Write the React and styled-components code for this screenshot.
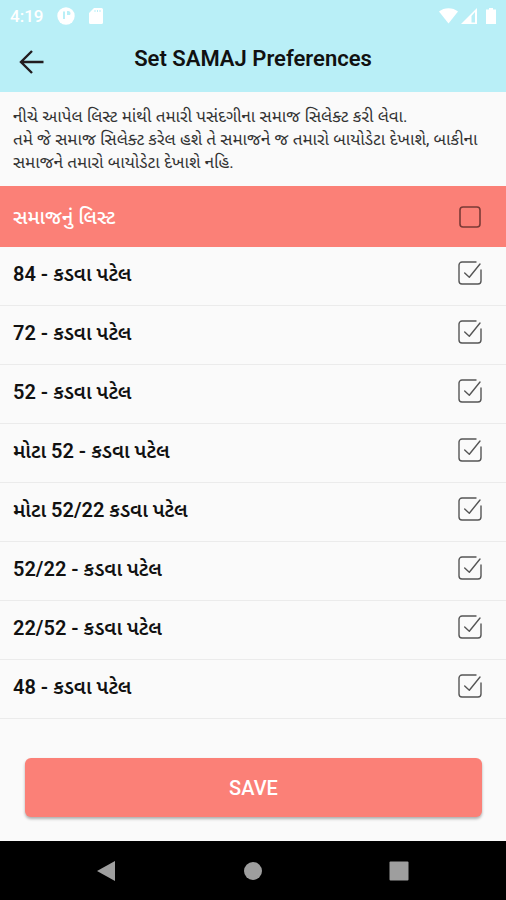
import React, { useState } from 'react'
import styled, { createGlobalStyle } from 'styled-components'

const GlobalStyle = createGlobalStyle`
    * {
        box-sizing: border-box;
    }
    body {
        margin: 0;
        background-color: #fafafa;
        color: #111111;
        font-family: Roboto, "Noto Sans Gujarati", "Noto Sans", sans-serif;
    }
`

const Page = styled.div`
    min-height: 100vh;
    display: flex;
    flex-direction: column;
`

const TopBar = styled.header`
    background-color: #b9eff7;
`

const StatusBar = styled.div`
    height: 32px;
    padding: 0 8px 0 10px;
    display: flex;
    align-items: center;
    justify-content: space-between;
    color: white;
`

const StatusGroup = styled.div`
    display: flex;
    align-items: center;
    gap: ${props => props.$gap};
`

const Clock = styled.span`
    font-size: 17px;
    font-weight: 500;
`

const AppBar = styled.div`
    height: 60px;
    padding: 0 16px;
    display: grid;
    grid-template-columns: 30px 1fr 30px;
    align-items: center;
`

const Title = styled.h1`
    margin: 0;
    padding-bottom: 6px;
    font-size: 22px;
    line-height: 28px;
    font-weight: 600;
    text-align: center;
`

const IconButton = styled.button`
    padding: 0;
    border: none;
    background: none;
    display: flex;
    color: ${props => props.$color};
    cursor: pointer;
`

const Main = styled.main`
    flex: 1;
    display: flex;
    flex-direction: column;
`

const Intro = styled.p`
    margin: 0;
    padding: 13px 13px 12px;
    font-size: 17px;
    line-height: 23px;
    color: #333333;
`

const ListHeader = styled.label`
    height: 61px;
    padding: 0 24px 0 13px;
    display: flex;
    align-items: center;
    justify-content: space-between;
    background-color: #fb8077;
    color: white;
    font-size: 20px;
    font-weight: 500;
`

const List = styled.ul`
    margin: 0;
    padding: 0;
    list-style: none;
`

const Row = styled.label`
    height: 59px;
    padding: 0 24px 6px 13px;
    display: flex;
    align-items: center;
    justify-content: space-between;
    border-bottom: 1px solid #ebebeb;
    font-size: 20px;
    font-weight: 600;
`

const RowText = styled.span`
    padding-top: 4px;
`

const TickWrap = styled.span`
    display: grid;

    & > * {
        grid-area: 1 / 1;
    }
    svg {
        pointer-events: none;
    }
`

const TickInput = styled.input`
    appearance: none;
    width: 24px;
    height: 24px;
    margin: 0;
    cursor: pointer;
`

const Footer = styled.div`
    margin-top: auto;
    padding: 24px 24px 24px 25px;
`

const SaveButton = styled.button`
    width: 100%;
    height: 59px;
    border: none;
    border-radius: 6px;
    background-color: #fb8077;
    box-shadow: 0 2px 3px rgba(0, 0, 0, 0.3);
    color: white;
    font-family: inherit;
    font-size: 20px;
    font-weight: 500;
    cursor: pointer;
`

const NavBar = styled.nav`
    height: 59px;
    padding: 0 34px;
    display: grid;
    grid-template-columns: repeat(3, 1fr);
    align-items: center;
    justify-items: center;
    background-color: black;
`

const samajList = [
    '84 - કડવા પટેલ',
    '72 - કડવા પટેલ',
    '52 - કડવા પટેલ',
    'મોટા 52 - કડવા પટેલ',
    'મોટા 52/22 કડવા પટેલ',
    '52/22 - કડવા પટેલ',
    '22/52 - કડવા પટેલ',
    '48 - કડવા પટેલ',
]

const Tick = ({ checked, onChange }) => (
    <TickWrap>
        <TickInput type="checkbox" checked={checked} onChange={onChange} />
        {checked ?
            <svg width="24" height="24" viewBox="0 0 24 24" fill="none" stroke="#555555" strokeWidth="1.4" strokeLinecap="round">
                <path d="M18 1H4a3 3 0 0 0-3 3v16a3 3 0 0 0 3 3h16a3 3 0 0 0 3-3V9" />
                <path d="M6.700 12l4.600 4.200L22 3" strokeLinejoin="round" />
            </svg>
            :
            <svg width="24" height="24" viewBox="0 0 24 24" fill="none" stroke="#7a3a36" strokeWidth="1.6">
                <rect x="2" y="2" width="20" height="20" rx="3" />
            </svg>
        }
    </TickWrap>
)

const App = () => {
    const [selected, setSelected] = useState(samajList)
    const [all, setAll] = useState(false)

    const toggle = (name) => {
        setSelected(selected.includes(name) ? selected.filter(item => item !== name) : [...selected, name])
    }

    const toggleAll = () => {
        setSelected(all ? [] : samajList)
        setAll(!all)
    }

    return (
        <>
            <GlobalStyle />
            <Page>
                <TopBar>
                    <StatusBar>
                        <StatusGroup $gap="14px">
                            <Clock>4:19</Clock>
                            <svg width="18" height="18" viewBox="0 0 18 18">
                                <circle cx="9" cy="9" r="8.700" fill="white" />
                                <path d="M6 4.500V12h2V4.500zM10 4h1.500a2.500 2.500 0 0 1 1.500 4h-3z" fill="#b9eff7" />
                            </svg>
                            <svg width="14" height="16" viewBox="0 0 14 16">
                                <path d="M5 0h7.500a1.500 1.500 0 0 1 1.500 1.500v13a1.500 1.500 0 0 1-1.500 1.500h-11A1.500 1.500 0 0 1 0 14.500V5z" fill="white" />
                                <path d="M6 2v2M8.500 2v2M11 2v2" stroke="#b9eff7" strokeWidth="1" />
                            </svg>
                        </StatusGroup>
                        <StatusGroup $gap="3px">
                            <svg width="19" height="16" viewBox="0 0 19 16">
                                <path d="M0 3.500C5-1 14-1 19 3.500L9.500 15.500z" fill="white" />
                            </svg>
                            <svg width="16" height="16" viewBox="0 0 16 16">
                                <path d="M0 16L16 0v16z" fill="white" />
                                <path d="M10.500 8v6.500H14V4z" fill="#b9eff7" />
                            </svg>
                            <svg width="18" height="16" viewBox="0 0 18 16">
                                <path d="M9 0h4v1.500h3V16H6V1.500h3z" fill="white" />
                            </svg>
                        </StatusGroup>
                    </StatusBar>
                    <AppBar>
                        <IconButton type="button" aria-label="Back" $color="#221c1f">
                            <svg width="30" height="30" viewBox="0 0 30 30" fill="none" stroke="currentColor" strokeWidth="2.4">
                                <path d="M27.500 15H5M16 4L5 15l11 11" />
                            </svg>
                        </IconButton>
                        <Title>Set SAMAJ Preferences</Title>
                    </AppBar>
                </TopBar>
                <Main>
                    <Intro>
                        નીચે આપેલ લિસ્ટ માંથી તમારી પસંદગીના સમાજ સિલેક્ટ કરી લેવા.
                        <br />
                        તમે જે સમાજ સિલેક્ટ કરેલ હશે તે સમાજને જ તમારો બાયોડેટા દેખાશે, બાકીના સમાજને તમારો બાયોડેટા દેખાશે નહિ.
                    </Intro>
                    <ListHeader>
                        <RowText>સમાજનું લિસ્ટ</RowText>
                        <Tick checked={all} onChange={toggleAll} />
                    </ListHeader>
                    <List>
                        {samajList.map(name => (
                            <li key={name}>
                                <Row>
                                    <RowText>{name}</RowText>
                                    <Tick checked={selected.includes(name)} onChange={() => toggle(name)} />
                                </Row>
                            </li>
                        ))}
                    </List>
                    <Footer>
                        <SaveButton type="button">SAVE</SaveButton>
                    </Footer>
                </Main>
                <NavBar>
                    <IconButton type="button" aria-label="Go back" $color="#9e9e9e">
                        <svg width="20" height="22" viewBox="0 0 20 22" fill="currentColor">
                            <path d="M18 1v20L0 11z" />
                        </svg>
                    </IconButton>
                    <IconButton type="button" aria-label="Home" $color="#9e9e9e">
                        <svg width="20" height="20" viewBox="0 0 20 20" fill="currentColor">
                            <circle cx="10" cy="10" r="9" />
                        </svg>
                    </IconButton>
                    <IconButton type="button" aria-label="Recent apps" $color="#9e9e9e">
                        <svg width="20" height="20" viewBox="0 0 20 20" fill="currentColor">
                            <rect x="0.500" y="0.500" width="19" height="19" rx="1" />
                        </svg>
                    </IconButton>
                </NavBar>
            </Page>
        </>
    )
}

export default App
